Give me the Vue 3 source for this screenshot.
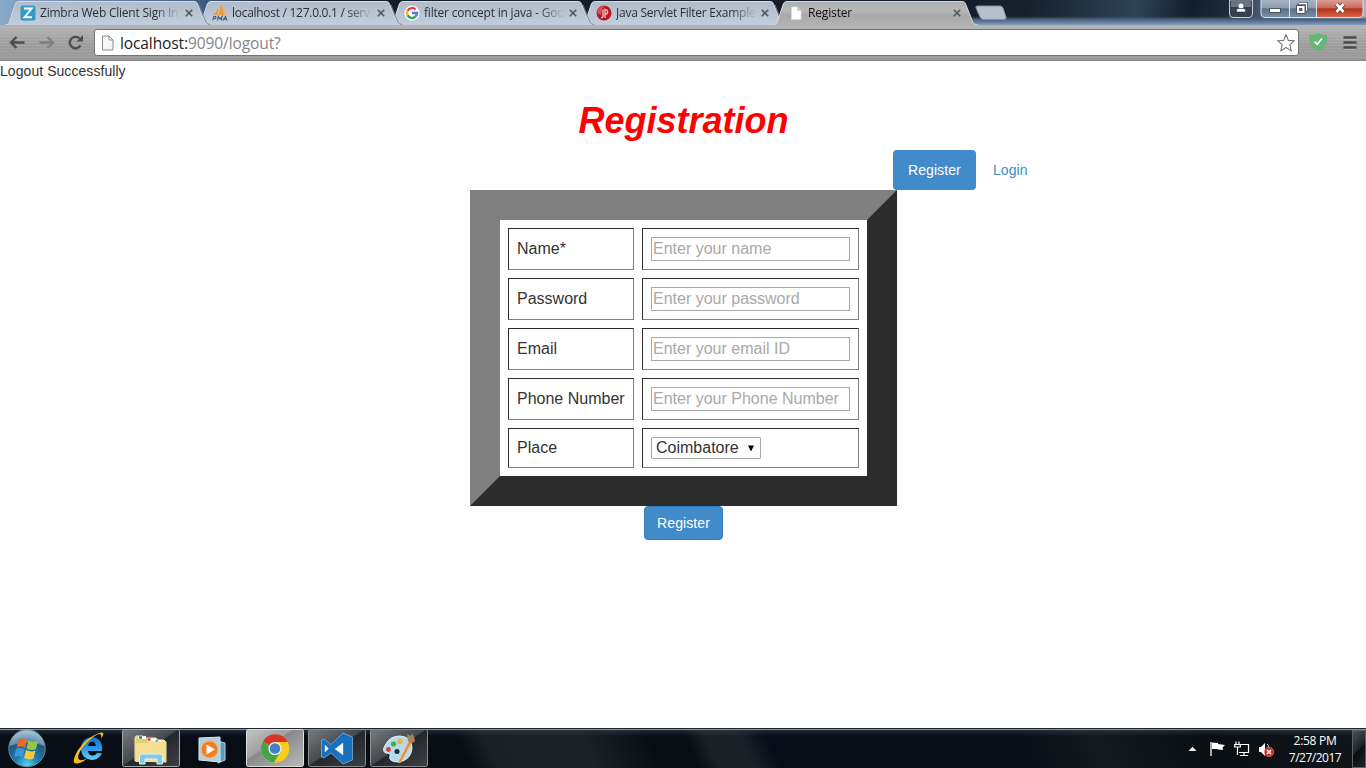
<script setup>
import { ref } from 'vue'

const tabs = [
  { title: 'Zimbra Web Client Sign In', icon: 'zimbra', spacing: '-0.22px' },
  { title: 'localhost / 127.0.0.1 / serv', icon: 'pma', spacing: '-0.28px' },
  { title: 'filter concept in java - Goo', icon: 'google', spacing: '-0.2px' },
  { title: 'Java Servlet Filter Example', icon: 'jsp', spacing: '-0.25px' },
  { title: 'Register', icon: 'page', active: true, spacing: '-0.15px' },
]
const fields = [
  { label: 'Name*', hint: 'Enter your name', type: 'text' },
  { label: 'Password', hint: 'Enter your password', type: 'password' },
  { label: 'Email', hint: 'Enter your email ID', type: 'text' },
  { label: 'Phone Number', hint: 'Enter your Phone Number', type: 'text' },
]
const place = ref('Coimbatore')
</script>

<template>
  <div class="screen">
    <header class="frame">
      <div class="tabs">
        <div v-for="(t, i) in tabs" :key="t.title" class="tab" :class="{ active: t.active }" :style="{ zIndex: t.active ? 9 : 5 - i }">
          <svg class="shape" width="205" height="25" viewBox="0 0 205 25">
            <defs>
              <linearGradient id="idle" x1="0" y1="0" x2="0" y2="1">
                <stop offset="0" stop-color="#b1bbc9" /><stop offset="1" stop-color="#c2cedd" />
              </linearGradient>
              <linearGradient id="current" x1="0" y1="0" x2="0" y2="1">
                <stop offset="0" stop-color="#adadad" /><stop offset=".35" stop-color="#b8b8b8" />
                <stop offset=".6" stop-color="#a9a9a9" /><stop offset="1" stop-color="#b3b3b3" />
              </linearGradient>
            </defs>
            <path d="M0 25C4 24.500 4 23 5 20L10 5C11 2 12 1.500 15 1.500H188C191 1.500 192 2 193 5L199 20C200 23 201 24.500 205 25Z" :fill="t.active ? 'url(#current)' : 'url(#idle)'" />
            <path d="M0 25C4 24.500 4 23 5 20L10 5C11 2 12 1.500 15 1.500H188C191 1.500 192 2 193 5L199 20C200 23 201 24.500 205 25" fill="none" :stroke="t.active ? '#d8dadd' : '#d3dce7'" stroke-width="1" />
            <path v-if="!t.active" d="M194 5L200 20C201 23 202 24 205 24.500" fill="none" stroke="#76818f" stroke-width=".9" />
          </svg>
          <svg class="fav" width="16" height="16" viewBox="0 0 16 16">
            <g v-if="t.icon === 'zimbra'">
              <rect x=".5" y=".5" width="15" height="15" rx="2" fill="#2e9bc8" />
              <path d="M4 3.500H11.500L4.500 12.300H12" fill="none" stroke="#fff" stroke-width="2" />
            </g>
            <g v-else-if="t.icon === 'pma'">
              <path d="M1 10Q5 7 6 2Q7 6 5.500 10ZM6.500 10Q9 5 8 0Q13 4 14 10Z" fill="#f29a38" />
              <path d="M10 3Q14 6 15 10H12Z" fill="#e9b678" />
              <path d="M.8 15.500L1.700 11.500H3.600Q4.800 13 2 13.800M5.500 15.500L6.300 11.500L8 14L10 11.500L9.500 15.500M11 15.500L13.500 11.500L15 15.500M12 14.300H14.500" fill="none" stroke="#4e5377" stroke-width="1.100" />
            </g>
            <g v-else-if="t.icon === 'google'">
              <circle cx="8" cy="8" r="7.600" fill="#f7f8fa" />
              <g fill="none" stroke-width="2.300">
                <path d="M3.600 5.600A5 5 0 0 1 11.600 4.500" stroke="#e34639" />
                <path d="M3.600 5.600A5 5 0 0 0 3.600 10.400" stroke="#f2b61d" />
                <path d="M3.600 10.400A5 5 0 0 0 11.400 11.700" stroke="#36a055" />
                <path d="M11.400 11.700A5 5 0 0 0 13 8H8" stroke="#477fe4" />
              </g>
            </g>
            <g v-else-if="t.icon === 'jsp'">
              <circle cx="8" cy="8" r="7.500" fill="#b7191d" />
              <path d="M1 8A7 7 0 0 1 9 1L6 4L5 10Z" fill="#d9504f" />
              <path d="M7 4.500V11Q6.500 13 5 12.500M9 3.500V13M9 5H11Q12.500 7 10.800 9H9" fill="none" stroke="#f1d6d6" stroke-width="1.200" />
            </g>
            <path v-else d="M3.500 2H9.500L13 5.500V14.500H3.500ZM9.500 2V5.500H13" fill="#fff" stroke="#dadada" stroke-width=".8" />
          </svg>
          <span class="title" :style="{ letterSpacing: t.spacing }">{{ t.title }}</span>
          <svg class="close" width="8" height="8" viewBox="0 0 8 8"><path d="M.8 .8L7.200 7.200M7.200 .8L.8 7.200" stroke="#4f545b" stroke-width="1.600" /></svg>
        </div>
        <svg class="newtab" width="32" height="16" viewBox="0 0 32 16">
          <path d="M2 1H25Q27 1 28 3L31 12Q31.500 14.500 29 14.500H9Q6 14.500 5 12L1 3Q.5 1 2 1Z" fill="#b6bfcb" stroke="#8390a0" />
        </svg>
      </div>
      <svg class="user" width="26" height="20" viewBox="0 0 26 20">
        <path d="M1.500 0V14Q1.500 17.500 5 17.500H21Q24.500 17.500 24.500 14V0Z" fill="#35414f" stroke="#c6cfda" />
        <path d="M3 0H23V7H3Z" fill="#687481" />
        <circle cx="13" cy="6" r="2.500" fill="#fff" /><path d="M8.500 12V10Q8.500 8.500 11 8.500H15Q17.500 8.500 17.500 10V12Z" fill="#fff" stroke="#26303d" stroke-width=".6" />
      </svg>
      <svg class="caption" width="106" height="20" viewBox="0 0 106 20">
        <defs>
          <linearGradient id="glass" x1="0" y1="0" x2="0" y2="1"><stop offset="0" stop-color="#a5b2c1" /><stop offset=".45" stop-color="#8e9dae" /><stop offset=".5" stop-color="#5c7086" /><stop offset="1" stop-color="#7890a8" /></linearGradient>
          <linearGradient id="shut" x1="0" y1="0" x2="0" y2="1"><stop offset="0" stop-color="#d99d91" /><stop offset=".45" stop-color="#c76a59" /><stop offset=".5" stop-color="#b5311b" /><stop offset="1" stop-color="#d5684b" /></linearGradient>
        </defs>
        <path d="M2 0V13Q2 17.500 6 17.500H57V0Z" fill="url(#glass)" /><path d="M57 0H104V13Q104 17.500 100 17.500H57Z" fill="url(#shut)" />
        <path d="M2 0V13Q2 17.500 6 17.500H100Q104 17.500 104 13V0M30.500 0V17M57.500 0V17" fill="none" stroke="#dbe3ed" />
        <rect x="10.500" y="8.500" width="11" height="4" fill="#fff" stroke="#4b5663" />
        <path d="M40 3.500H47.500V10.500M40 3.500V5M45.500 10.500H47.500" fill="none" stroke="#4b5663" stroke-width="3" />
        <path d="M40 3.500H47.500V10.500" fill="none" stroke="#fff" stroke-width="1.300" />
        <path d="M37.500 5.500H46V13.500H37.500ZM40.500 8.500V10.500H43V8.500Z" fill="#fff" fill-rule="evenodd" stroke="#4b5663" />
        <path d="M77.500 4L84.500 12M84.500 4L77.500 12" stroke="#6b3a39" stroke-width="4.400" /><path d="M77.500 4L84.500 12M84.500 4L77.500 12" stroke="#fff" stroke-width="2.700" />
      </svg>
    </header>

    <div class="toolbar">
      <svg class="navs" width="94" height="35" viewBox="0 0 94 35">
        <path d="M24.500 17.500H11M16.500 12L11 17.500L16.500 23" fill="none" stroke="#4c4c4c" stroke-width="2.300" />
        <path d="M39.500 17.500H53M47.500 12L53 17.500L47.500 23" fill="none" stroke="#7f7f7f" stroke-width="2.300" />
        <path d="M80.500 20.200A5.700 5.700 0 1 1 79.500 13.500" fill="none" stroke="#4c4c4c" stroke-width="2.400" />
        <path d="M83 10V16.500H76.500Z" fill="#4c4c4c" />
      </svg>
      <div class="omnibox">
        <svg class="doc" width="14" height="16" viewBox="0 0 14 16"><path d="M1.500 1H8L12 5V15H1.500ZM8 1V5H12" fill="#f7f7f7" stroke="#8b8b8b" /></svg>
        <span class="url">localhost:<span>9090/logout?</span></span>
        <svg class="star" width="20" height="20" viewBox="0 0 20 20"><path d="M10 1.500L12.300 7.400L18.500 7.700L13.700 11.700L15.300 17.900L10 14.500L4.700 17.900L6.300 11.700L1.500 7.700L7.700 7.400Z" fill="#fff" stroke="#777" stroke-width="1.100" stroke-linejoin="round" /></svg>
      </div>
      <svg class="shield" width="20" height="20" viewBox="0 0 20 20"><path d="M10 1Q14 3 19 3V8Q18 16 10 19.500Q2 16 1 8V3Q6 3 10 1Z" fill="#68b677" /><path d="M6.500 9.500L9.200 12.300L14 6.500" fill="none" stroke="#fff" stroke-width="1.500" /></svg>
      <svg class="menu" width="14" height="15" viewBox="0 0 14 15"><path d="M1 3H13M1 8H13M1 13H13" stroke="#c3c3c3" stroke-width="3" /><path d="M.5 2.500H13.500M.5 7.500H13.500M.5 12.500H13.500" stroke="#484848" stroke-width="2.500" /></svg>
    </div>

    <main class="page">
      <div class="message">Logout Successfully</div>
      <h1>Registration</h1>
      <nav><a class="pill">Register</a><a class="login">Login</a></nav>
      <form @submit.prevent>
        <div class="sheet">
          <template v-for="f in fields" :key="f.label">
            <label class="cell">{{ f.label }}</label>
            <div class="cell"><input :type="f.type" :placeholder="f.hint" /></div>
          </template>
          <label class="cell short">Place</label>
          <div class="cell short">
            <div class="choice">
              <select v-model="place"><option>Coimbatore</option></select>
              <svg width="8" height="7" viewBox="0 0 8 7"><path d="M1 .5H7L4 6.500Z" fill="#000" /></svg>
            </div>
          </div>
        </div>
        <button>Register</button>
      </form>
    </main>

    <footer class="taskbar">
      <svg class="apps" width="430" height="39" viewBox="0 0 430 39">
        <defs>
          <radialGradient id="orb" cx=".5" cy=".95" r=".9"><stop offset="0" stop-color="#50d7f5" /><stop offset=".35" stop-color="#1b7db0" /><stop offset=".75" stop-color="#24557f" /><stop offset="1" stop-color="#92b8cd" /></radialGradient>
          <linearGradient id="ie" x1="0" y1="0" x2="0" y2="1"><stop offset="0" stop-color="#1b73c9" /><stop offset=".5" stop-color="#2c95e5" /><stop offset="1" stop-color="#62d4fa" /></linearGradient>
          <linearGradient id="run" x1="0" y1="0" x2="1" y2="1"><stop offset="0" stop-color="#777b7f" /><stop offset=".48" stop-color="#45494e" /><stop offset=".5" stop-color="#24282d" /><stop offset="1" stop-color="#3c4045" /></linearGradient>
          <linearGradient id="front" x1="0" y1="0" x2="1" y2="1"><stop offset="0" stop-color="#c4c4c4" /><stop offset=".4" stop-color="#a0a0a0" /><stop offset=".42" stop-color="#898989" /><stop offset="1" stop-color="#bababa" /></linearGradient>
        </defs>
        <circle cx="27" cy="19.500" r="18.200" fill="url(#orb)" stroke="#6c8da4" />
        <path d="M10 17A17 17 0 0 1 44 17Q28 10 10 17Z" fill="#a6c8d8" opacity=".5" />
        <path d="M19 10Q23 8 27 11L25 19Q21 16.500 16.500 18.500Z" fill="#eb6535" />
        <path d="M28.500 11.500Q33 14 38 11.500L36 20Q31 22 26.500 19.500Z" fill="#97c844" />
        <path d="M16 20Q20.500 18 24.500 20.500L22.500 28.500Q18 26 14 28Z" fill="#3e96d7" />
        <path d="M26 21Q31 23.500 35.500 21.500L33.500 29.500Q29 31.500 24 29Z" fill="#fac93d" />

        <path fill-rule="evenodd" d="M81 21Q81 9 92 8Q103 9 102 22H88Q89 27 93 26.500Q96 26 97 24H102Q99 31 92 31Q82 30 81 21ZM88 17H96Q95 12.500 92 12.500Q89 12.500 88 17Z" fill="url(#ie)" />
        <path d="M101 10Q107 1 98 4.500Q86 9 78 21Q70 35 77 34.500Q82 34 87 29.500Q79 33 78 29Q78 23 86 14.500Q95 5 100 5Q102 6 101 10Z" fill="#f5bd25" />

        <rect x="122.500" y=".5" width="57" height="37" rx="2" fill="url(#run)" stroke="#a4a6a8" />
        <path d="M135 32V9L136 7H143L145 9H156L158 11H164L166 13V33Z" fill="#e6cd75" stroke="#f7e8aa" />
        <path d="M138 8.500H146M147 11H156M156 13H164" fill="none" stroke="#fff" stroke-width="3" />
        <path d="M139 8.500H142" stroke="#179c35" stroke-width="2.500" /><path d="M147.500 10.500H150.500" stroke="#df4326" stroke-width="2.500" /><path d="M155.500 12.500H158" stroke="#2c8ad3" stroke-width="2.500" />
        <path d="M135 14H148L151 12.500H166L165 33H136Z" fill="#f5df91" /><path d="M139.500 35V27Q139.500 25 142 25H160Q162.500 25 162.500 27V35H157V30H145V35Z" fill="#87c8e9" stroke="#dcf3fb" />

        <path d="M218 12L225 14V31L218 34Z" fill="#5c9bba" stroke="#a8d6e8" /><path d="M199 9L220 8V33L199 31Z" fill="#b4cee0" stroke="#d4e6ef" />
        <circle cx="209.500" cy="20.500" r="8.500" fill="#f17d24" stroke="#ffba67" /><path d="M206.500 15.500L215 20.500L206.500 25.500Z" fill="#fff" />

        <rect x="246.500" y=".5" width="57" height="37" rx="2" fill="url(#front)" stroke="#dedede" />
        <circle cx="275" cy="19.500" r="14" fill="#f4ca20" /><path d="M275 19.500L262.900 12.500A14 14 0 0 1 287.600 13Z" fill="#d83427" />
        <path d="M275 19.500L262.900 12.500A14 14 0 0 0 274 33.500L281 22.500Z" fill="#45a547" /><path d="M275 13H287.600A14 14 0 0 1 274 33.500L281 22.500Z" fill="#f6ce20" />
        <circle cx="275" cy="19.500" r="6.600" fill="#f5f5f5" /><circle cx="275" cy="19.500" r="5.300" fill="#447fc2" />

        <rect x="308.500" y=".5" width="57" height="37" rx="2" fill="url(#run)" stroke="#8b8e91" />
        <path d="M343 4L352.500 8V31L343 35L331 24L324 29L321.500 28V11L324 10L331 15.500ZM343 14L335 20L343 26ZM325 16V23L328.500 19.500Z" fill="#1871bd" fill-rule="evenodd" stroke="#74aedc" stroke-width=".8" />
        <path d="M343 14L335 20L343 26ZM325 16V23L328.500 19.500Z" fill="#f2f7fb" />

        <rect x="370.500" y=".5" width="57" height="37" rx="2" fill="url(#run)" stroke="#8b8e91" />
        <path d="M386 15Q390 7 400 7Q412 8 412 19Q411 31 399 33Q388 33 390 27Q391 24 386 24Q381 22 386 15Z" fill="#b5dbea" stroke="#e5f4fa" />
        <circle cx="388.500" cy="20.500" r="2.400" fill="#dc3d2b" /><circle cx="393.500" cy="15" r="2.600" fill="#3fae45" /><circle cx="400" cy="12.500" r="2.800" fill="#e9b536" /><circle cx="397" cy="22.500" r="2.500" fill="#202d37" />
        <path d="M409 12L412 13L401 33Q398 35 399 32Z" fill="#e78b36" stroke="#f9bd76" stroke-width=".7" /><path d="M408 12L407 5L411 7L412 4L414 8L415 12L411 15Z" fill="#a98258" />
      </svg>
      <div class="tray">
        <svg width="92" height="39" viewBox="0 0 92 39">
          <path d="M2.500 22H10.500L6.500 17.800Z" fill="#e9edf0" />
          <path d="M25 13V27" stroke="#fff" stroke-width="1.300" /><path d="M26 13.500L32 14V15L39 16L36.500 18.500L37 21L32 20.500L31.500 20H26Z" fill="#fff" />
          <path d="M53.500 15.500H62.500V23.500H53M58 24V26.500M54 26.500H62M50 12.500V15M53 12.500V15M48.700 15.500H54.300V18H48.700ZM51.500 18V26" fill="none" stroke="#fff" stroke-width="1.200" />
          <path d="M73 18H75L79 14V27L75 23H73Z" fill="#fff" /><path d="M81 15Q82.500 16 82.500 18" fill="none" stroke="#ddd" />
          <circle cx="83" cy="23" r="4.700" fill="#cf3022" stroke="#eb8177" stroke-width=".7" /><path d="M81 21L85 25M85 21L81 25" stroke="#fff" stroke-width="1.500" />
        </svg>
        <div class="clock"><span>2:58 PM</span><span class="date">7/27/2017</span></div>
        <div class="peek"></div>
      </div>
    </footer>
  </div>
</template>

<style>
body { overflow: hidden; background: #fff; }
</style>
<style scoped>
* { box-sizing: border-box; }
svg { display: block; flex: none; }
.screen { width: 1366px; height: 768px; display: flex; flex-direction: column; background: #fff; font-family: "Liberation Sans", Arial, sans-serif; }
.frame { position: relative; height: 25px; flex: none; background: linear-gradient(90deg, #88a9ca 0, #3f5c80 205px, transparent 300px), linear-gradient(180deg, transparent 65%, #48627f 78%, #829dba 100%), linear-gradient(100deg, #111d2b 0, #15202c 75%, #2f4355 83%, #121e2b 87%, #1d2d3c 90%, #829ab3 95%, #a0b5cc 100%); }
.tabs { display: flex; padding-left: 5px; isolation: isolate; }
.tab { position: relative; display: flex; align-items: center; flex: none; width: 205px; height: 25px; margin-right: -13px; padding-left: 15px; }
.shape { position: absolute; left: 0; top: 0; }
.fav { position: relative; margin-right: 4px; }
.title { position: relative; width: 142px; overflow: hidden; white-space: nowrap; font: 12px/18px "Open Sans", sans-serif; color: #29303a; -webkit-mask-image: linear-gradient(90deg, #000 115px, transparent 140px); mask-image: linear-gradient(90deg, #000 115px, transparent 140px); }
.active .title { color: #111; }
.close { position: relative; margin-left: 3px; }
.newtab { margin: 5px 0 0 10px; }
.user { position: absolute; left: 1228px; top: 0; }
.caption { position: absolute; left: 1259px; top: 0; }
.toolbar { height: 36px; flex: none; display: flex; align-items: flex-start; border-bottom: 1px solid #858585; background: repeating-linear-gradient(180deg, transparent 0, transparent 2px, rgba(255,255,255,.08) 2px, rgba(255,255,255,.08) 3px), linear-gradient(180deg, #b4b4b4, #9c9c9c 60%, #999 100%); }
.omnibox { height: 27px; width: 1205px; flex: none; margin-top: 4px; display: flex; align-items: center; padding: 0 2px 0 6px; background: #fff; border: 1px solid #747474; border-radius: 3px; }
.url { flex: 1; margin-left: 5px; font: 15.5px/24px "Open Sans", sans-serif; color: #222; letter-spacing: -.1px; }
.url span { color: #858585; }
.shield { margin: 7px 0 0 9px; }
.menu { margin: 10px 0 0 15px; }
.page { flex: 1; display: flex; flex-direction: column; font-size: 14px; line-height: 20px; color: #333; }
.message { height: 20px; letter-spacing: .06px; }
h1 { margin: 20px 0 10px; height: 39px; font: italic bold 36px/39px "Liberation Sans", Arial, sans-serif; color: red; text-align: center; padding-left: 1px; }
nav { display: flex; height: 40px; padding-left: 893px; letter-spacing: .08px; }
.pill { width: 83px; padding: 10px 15px; background: #428bca; color: #fff; border-radius: 4px; }
.login { padding: 10px 17px; color: #428bca; }
form { display: flex; flex-direction: column; align-items: center; padding-left: 1px; }
.sheet { display: grid; grid-template-columns: 126px 217px; grid-template-rows: repeat(4, 42px) 40px; gap: 8px; padding: 8px; border: 30px solid; border-color: #808080 #2c2c2c #2c2c2c #808080; font-size: 16px; }
.cell { display: flex; align-items: center; padding: 0 8px; border: 1px solid; border-color: #2c2c2c #808080 #808080 #2c2c2c; white-space: nowrap; }
.short { padding-bottom: 1px; }
input { width: 199px; height: 24px; padding: 1px; margin: 0; border: 1px solid #a9a9a9; border-radius: 0; font: 16px "Liberation Sans", Arial, sans-serif; background: #fff; outline: none; }
input::placeholder { color: #a9a9a9; opacity: 1; }
.choice { position: relative; }
select { display: block; width: 110px; height: 22px; appearance: none; padding: 0 4px; margin: 0; border: 1px solid #a9a9a9; border-radius: 1px; background: #fff; color: #333; font: 16px "Liberation Sans", Arial, sans-serif; }
.choice svg { position: absolute; right: 6px; top: 8px; }
button { width: 79px; height: 34px; padding: 0; border: 1px solid #357ebd; border-radius: 4px; background: #428bca; color: #fff; font: 14px/20px "Liberation Sans", Arial, sans-serif; letter-spacing: .08px; }
.taskbar { height: 40px; flex: none; display: flex; justify-content: space-between; border-top: 1px solid #1e2731; box-shadow: inset 0 1px #84909b; background: linear-gradient(180deg, rgba(57,75,91,.55), transparent 7px), linear-gradient(65deg, #080e16 0, #080d14 34%, #1a2024 36%, #1c2125 43%, #080d14 48%, #080d14 50.5%, #1b2025 52%, #1a2026 54.5%, #080c16 56.5%, #080c14 74%, #151a1f 80%, #090e13 88%, #11171b 100%); }
.tray { display: flex; }
.clock { width: 74px; padding-top: 3px; display: flex; flex-direction: column; align-items: center; color: #fff; font: 12px/17px "Open Sans", sans-serif; letter-spacing: -.3px; }
.date { letter-spacing: -.5px; }
.peek { width: 14px; height: 38px; margin-top: 1px; border: 1px solid #5a6268; background: linear-gradient(135deg, #4a5259, #1b2127 50%, #090e12 52%, #1c2227); }
</style>
